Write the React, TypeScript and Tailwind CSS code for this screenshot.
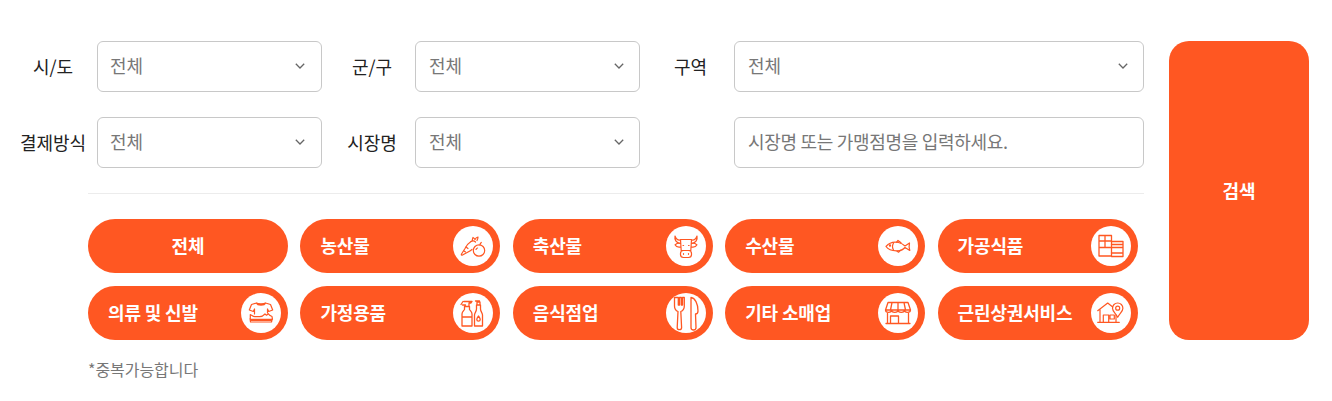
import React from "react";

const O = "#ff5722";

function Chevron() {
  return (
    <svg width="10" height="6" viewBox="0 0 10 6" fill="none" stroke="#666" strokeWidth="1.3" className="shrink-0">
      <path d="M.8.8 5 5l4.2-4.2" />
    </svg>
  );
}

function Select({ left = "pl-3", right = "pr-[16px]" }: { left?: string; right?: string }) {
  return (
    <div className={`flex h-[51px] items-center justify-between rounded-md border border-[#c8c8c8] bg-white pb-[2px] ${left} ${right}`}>
      <span className="text-[18px] tracking-[-0.1px] text-[#777]">전체</span>
      <Chevron />
    </div>
  );
}

const S = { fill: "none", stroke: O, strokeWidth: 1.2, strokeLinecap: "round", strokeLinejoin: "round" } as const;

function Ico({ children }: { children: React.ReactNode }) {
  return (
    <svg width="40" height="40" viewBox="0 0 40 40" {...S}>
      {children}
    </svg>
  );
}

const icons: Record<string, React.ReactNode> = {
  produce: (
    <Ico>
      <path d="M18 15.500c-2.500 1.500-4.500 4-6 7l-3.500 5.500c-.5 1 .2 1.500 1 1l6.500-3.500c1.200-.6 2.200-1.300 3-2.200" />
      <path d="M18 15.500c1.500-1 3.300-.8 4.500.5M19 15c.5-1.500.5-2.500 1-3.500 1 .5 1.500 1 2 2 .5-1 1.500-2 3-2.500 0 1.500-.5 2.500-1 3.500M13 21l2 1.500M11 25l1.500 1" />
      <circle cx="26" cy="24.500" r="5.700" />
      <path d="M27 19c0-1 .4-1.800 1.300-2.500M23 23.500c.3-.8.8-1.300 1.500-1.500" />
    </Ico>
  ),
  cow: (
    <Ico>
      <path d="M14.500 14c-2 .2-4.500-.5-5.500-4-.6 3.500.8 7 5.500 7.500M25.500 14c2 .2 4.500-.5 5.500-4 .6 3.500-.8 7-5.500 7.500" />
      <path d="M14.500 13.500h11l-.7 11h-9.600zM14.300 17c-2 0-4.300.5-5.300 1.800 1 1.900 3.300 2.700 5.600 2.200M25.700 17c2 0 4.300.5 5.300 1.800-1 1.900-3.300 2.700-5.600 2.200" />
      <rect x="14.500" y="24.500" width="11" height="7" rx="3" />
      <path d="M17.500 27.500v.8M22.500 27.500v.8M17 19.500h.6M22.500 19.500h.6" />
    </Ico>
  ),
  fish: (
    <Ico>
      <path d="M8 20.500c3-3.500 8-5 12.500-4 3 .7 5 2 6.500 3.500l4.500-3c-.6 2.500-.6 4.800.3 7.500L27 21.500c-2 2.300-5 3.500-8.500 3.300C14 24.800 10 23.300 8 20.500z" />
      <path d="M15.500 17c-1.300 2.300-1.300 4.800 0 7M18.500 16.200l1.500-1.700 3 2.300M19 25l1.500 1.200 2-1.800" />
      <circle cx="12" cy="19.500" r=".6" />
    </Ico>
  ),
  food: (
    <Ico>
      <path strokeWidth="1.300" d="M8 9.500h12.500V30H8zM8 15h12.500M8 21.500h12.500M14 9.500v12" />
      <path strokeWidth="1.300" d="M20.500 15.500H32V30.500H20.500M20.500 18.500H32M20.500 21.500H32M20.500 27H32" />
    </Ico>
  ),
  clothes: (
    <Ico>
      <path d="M15.500 10 10.500 11.500 8.300 17l4 1.500 1.200-2.500v5M24.500 10l5 1.500 2.200 5.500-4 1.500-1.200-2.500V20M15.500 10c1 2.800 8 2.800 9 0M15.500 10c1 1.200 8 1.200 9 0" />
      <path d="M9.300 21.500c1.500.5 2.500 2.200 4.500 2.200h5c1.800 0 4-1.500 5.200-2.700l1.500 1.200 1.800-1.500c.8 1.500 2.500 2.300 3.700 2.800l.5 2.800H9.300zM9 25.500l.5 3.500h21l.8-3.500M9.800 27.500h20.700" />
    </Ico>
  ),
  clean: (
    <Ico>
      <path strokeWidth="1.300" d="M9 33V21c0-2 1.500-3 2.500-4.500v-3h5v3C17.500 18 19 19 19 21v12zM9.500 12h3M11 8.500h8l-1 1.500h-2v3.500M10 8.500l-2 3M9 24h10" />
      <path strokeWidth="1.300" d="M21.500 33V22c0-2 2-3.500 2-6v-4h4v4c0 2.500 2 4 2 6v11zM24 12V9h3v3M22.500 8h4M25.500 23c-1 1.500-1.700 2.500-1.700 3.500a1.700 1.700 0 0 0 3.400 0c0-1-.7-2-1.700-3.500z" />
    </Ico>
  ),
  store: (
    <Ico>
      <path strokeWidth="1.300" d="M10 9.500h20l2.500 7.500h-25zM14 9.500 12.500 17M20 9.500V17M26 9.500 27.500 17M7.500 17c0 3.200 6 3.200 6 0 0 3.200 6.500 3.200 6.500 0 0 3.200 6.500 3.200 6.500 0 0 3.200 6 3.200 6 0" />
      <path strokeWidth="1.300" d="M9.500 20.500V30.500h21V20.500M12.500 30.500V23h8v7.500M8 30.500h24" />
    </Ico>
  ),
  house: (
    <Ico>
      <path d="M6.700 17.700 16.700 10l5 4M9 16v13.300h16V22M6.700 29.300h21.600M12.300 29.300V22h5.400v7.300M19 22h4.300v4H19z" />
      <path d="M26.700 10a5.200 5.200 0 0 1 5.200 5.200c0 3.300-3.200 5.200-5.200 9.100-2-3.900-5.200-5.800-5.200-9.100a5.200 5.200 0 0 1 5.200-5.200z" />
      <circle cx="26.700" cy="15.200" r="2" />
    </Ico>
  ),
  cutlery: (
    <Ico>
      <path strokeWidth="1.300" d="M8.500 4.500v8.500c0 3 1.700 4.800 3.500 5.500l-.8 16a2.200 2.200 0 0 0 4.400 0l-.8-16c1.800-.7 3.500-2.500 3.500-5.500V4.500h-1.800V12h-1.200V4.500h-1.800V12h-1.200V4.500z" />
      <path strokeWidth="1.300" d="M25 4.500c4 .5 7 6 7 13.500 0 2-1 3-2.500 3l.5 13.500a2.500 2.500 0 0 1-5 0z" />
    </Ico>
  ),
};

function Chip({ label, icon }: { label: string; icon?: string }) {
  return (
    <div className={`flex h-[54px] items-center rounded-[27px] bg-[#ff5722] text-[18px] font-bold text-white ${icon ? "justify-between pl-5 pr-[7px]" : "justify-center"}`}>
      <span className="-mt-[2px] whitespace-nowrap tracking-[-0.15px]">{label}</span>
      {icon ? (
        <span className="flex h-10 w-10 items-center justify-center rounded-full bg-white">{icons[icon]}</span>
      ) : null}
    </div>
  );
}

export default function App() {
  return (
    <div
      className="flex h-[401px] w-[1332px] items-start overflow-hidden bg-white pt-[41px] text-[#222]"
      style={{ fontFamily: '"Noto Sans CJK KR", "Noto Sans", sans-serif' }}
    >
      <div className="w-[1144px] shrink-0">
        <div className="grid grid-cols-[97px_225px_93px_225px_94px_410px] grid-rows-[51px_51px] items-center gap-y-[25px] text-[18px]">
          <div className="-mt-[1px] whitespace-nowrap pl-[9px] text-center">시/도</div>
          <Select />
          <div className="-mt-[1px] whitespace-nowrap pl-[7px] text-center">군/구</div>
          <Select left="pl-[13px]" right="pr-[15px]" />
          <div className="-mt-[1px] whitespace-nowrap pl-[7px] text-center">구역</div>
          <Select left="pl-[13px]" right="pr-[15px]" />
          <div className="-mt-[1px] whitespace-nowrap pl-[9px] text-center">결제방식</div>
          <Select />
          <div className="-mt-[1px] whitespace-nowrap pl-[7px] text-center">시장명</div>
          <Select left="pl-[13px]" right="pr-[15px]" />
          <div />
          <div className="flex h-[51px] items-center rounded-md border border-[#c8c8c8] bg-white pb-[2px] pl-[13px]">
            <span className="whitespace-nowrap tracking-[-0.3px] text-[#777]">시장명 또는 가맹점명을 입력하세요.</span>
          </div>
        </div>
        <div className="ml-[88px] mt-[25px] border-t border-[#ececec]" />
        <div className="ml-[88px] mt-[25px] grid grid-cols-[200px_200px_200px_200px_200px] gap-x-[12.4px] gap-y-[13px]">
          <Chip label="전체" />
          <Chip label="농산물" icon="produce" />
          <Chip label="축산물" icon="cow" />
          <Chip label="수산물" icon="fish" />
          <Chip label="가공식품" icon="food" />
          <Chip label="의류 및 신발" icon="clothes" />
          <Chip label="가정용품" icon="clean" />
          <Chip label="음식점업" icon="cutlery" />
          <Chip label="기타 소매업" icon="store" />
          <Chip label="근린상권서비스" icon="house" />
        </div>
        <div className="ml-[88px] mt-[17px] text-[16px] leading-[24px] tracking-[-0.05px] text-[#777]">*중복가능합니다</div>
      </div>
      <div className="ml-[25px] flex h-[299px] w-[140px] items-center justify-center rounded-[20px] bg-[#ff5722] text-[18px] font-bold text-white">
        <span className="-mt-[1px] tracking-[-0.15px]">검색</span>
      </div>
    </div>
  );
}
